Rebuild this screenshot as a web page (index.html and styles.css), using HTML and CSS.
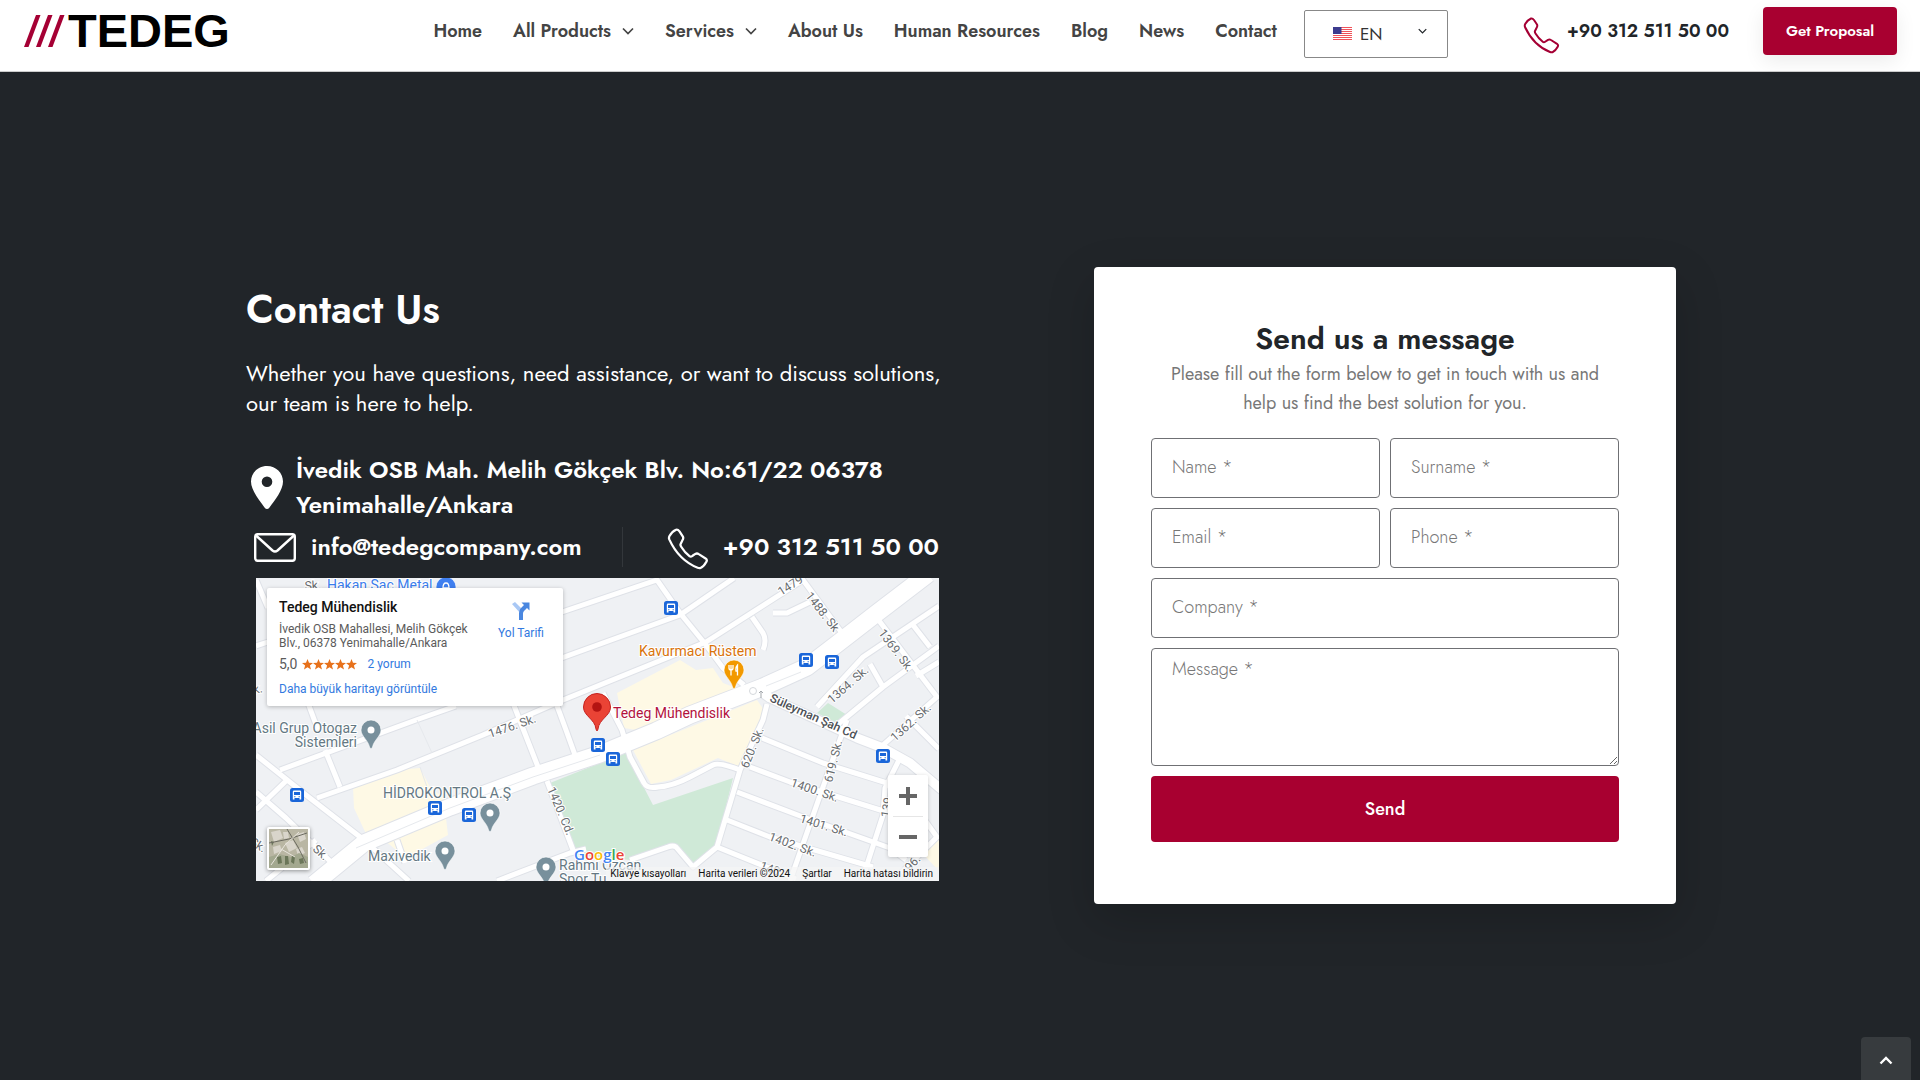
FILE: index.html
```html
<!DOCTYPE html>
<html lang="en">
<head>
<meta charset="utf-8">
<title>Contact Us - TEDEG</title>
<meta name="viewport" content="width=device-width, initial-scale=1">
<link rel="stylesheet" href="styles.css">
</head>
<body>
<svg class="defs" aria-hidden="true">
  <symbol id="handset" viewBox="0 0 37 37">
    <path d="M8 1.500Q9.500 1 11 3L14 7.500Q14.800 9 13.500 11L12 14Q11.500 15 12.500 16.500Q15.500 21.500 20 25Q21 25.600 22.500 24.500L25 22.800Q26.500 22 28 23L34 26.800Q35.700 28 34.700 29.800Q32.500 34 29.500 35.200Q28.500 35.600 27 35C17 31 7.500 22 2 10Q1.400 8.500 2.200 7Q4.500 3 8 1.500Z" fill="none" stroke="currentColor" stroke-width="2" stroke-linejoin="round"/>
  </symbol>
  <symbol id="chevron" viewBox="0 0 12 8"><path d="M1 1.500L6 6.500L11 1.500" fill="none" stroke="currentColor" stroke-width="1.700"/></symbol>
</svg>

<header class="header">
  <a class="logo" href="#" aria-label="TEDEG">
    <svg class="logo-mark" viewBox="0 0 41 33" aria-hidden="true"><path d="M0 32L12 0h4.500L4.500 32zM12 32L24 0h4.500L16.500 32zM24 32L36 0h4.500L28.500 32z" fill="#a50034"/></svg>
    <span>TEDEG</span>
  </a>
  <nav class="nav">
    <a href="#">Home</a>
    <a href="#">All Products <svg class="chev"><use href="#chevron"/></svg></a>
    <a href="#">Services <svg class="chev"><use href="#chevron"/></svg></a>
    <a href="#">About Us</a>
    <a href="#">Human Resources</a>
    <a href="#">Blog</a>
    <a href="#">News</a>
    <a href="#">Contact</a>
  </nav>
  <div class="lang">
    <svg class="flag" viewBox="0 0 19 13" aria-hidden="true"><path fill="#fff" d="M0 0h19v13H0z"/><path stroke="#f0525a" stroke-width="1" d="M0 .5h19M0 2.500h19M0 4.500h19M0 6.500h19M0 8.500h19M0 10.500h19M0 12.500h19"/><path fill="#3c3b8e" d="M0 0h8.500v7H0z"/></svg>
    <select aria-label="Language"><option>EN</option></select>
    <svg class="lang-chev"><use href="#chevron"/></svg>
  </div>
  <a class="header-phone" href="tel:+903125115000"><svg><use href="#handset"/></svg><span>+90 312 511 50 00</span></a>
  <button class="proposal" type="button">Get Proposal</button>
</header>

<main class="main">
  <div class="container">
    <section class="info">
      <h1>Contact Us</h1>
      <p class="lead">Whether you have questions, need assistance, or want to discuss solutions, our team is here to help.</p>
      <div class="address">
        <svg viewBox="0 0 32 43" aria-hidden="true"><path fill="#fff" fill-rule="evenodd" d="M16 0C7 0 0 7 0 15.500C0 24 8 34 13.500 41.500Q16 44.500 18.500 41.500C24 34 32 24 32 15.500C32 7 25 0 16 0ZM16 10.500a5.300 5.300 0 1 1 0 10.600a5.300 5.300 0 0 1 0-10.600Z"/></svg>
        <span>İvedik OSB Mah. Melih Gökçek Blv. No:61/22 06378 Yenimahalle/Ankara</span>
      </div>
      <div class="reach">
        <a class="mail" href="mailto:info@tedegcompany.com">
          <svg viewBox="0 0 42 29" aria-hidden="true"><g fill="none" stroke="#fff" stroke-width="2.400" stroke-linejoin="round"><rect x="1.200" y="1.200" width="39.600" height="26.600" rx="2.500"/><path d="M2 2.500L18.500 17.500Q21 19.500 23.500 17.500L40 2.500"/></g></svg>
          <span>info@tedegcompany.com</span>
        </a>
        <a class="tel" href="tel:+903125115000"><svg><use href="#handset"/></svg><span>+90 312 511 50 00</span></a>
      </div>

      <div class="map">
        <svg class="map-canvas" viewBox="0 0 683 303" preserveAspectRatio="xMidYMid slice">
          <defs>
            <g id="bus"><rect x="-7" y="-7" width="14" height="14" rx="2.500" fill="#1a66d9"/><path fill="#fff" fill-rule="evenodd" d="M-3-4.500h6q1.200 0 1.200 1.200V4.500h-1.700V3h-5v1.500h-1.700v-7.800q0-1.200 1.200-1.200zM-3-3v3h6v-3zM-2.800 1.200v1h1.200v-1zM1.600 1.200v1h1.200v-1z"/></g>
            <path id="pin" d="M0-10A10 10 0 0 0-10 0C-10 6-3 10-1.500 17Q0 20.500 1.500 17C3 10 10 6 10 0A10 10 0 0 0 0-10Z"/>
            <g id="roads">
              <path d="M300 36L401 2L424 35L450 67L467 90L488 107M300 82L424 37L478 0M61 220L141 192L227 157L307 122L450 64L547 2L586 55M621 40L681 119L627 167M683 28L607 79L561 129M683 68L627 109L581 147M657 47L674 69M660 98L683 84M614 86L627 109M650 138L683 171"/>
              <path d="M496 39L507 55Q511 62 507 72M517 35H531L554 24"/>
              <path d="M511 126L507 142L484 192L461 269L437 289L420 269Q417 267 412 269L374 282M591 142L567 209L534 303M506 160L567 185L631 205M494 189L534 204L634 235M481 214L547 239L634 270M471 242L514 259L617 289M461 269L540 301M643 182L629 210L627 237L608 296M668 241L681 259L645 295M634 270L650 282"/>
              <path d="M347 115L366 152L374 179L388 205Q391 211 402 209Q417 208 434 199L457 187Q463 184 484 192M291 203L317 272M241 303L314 275L330 271M257 125L284 194M300 125L310 152L319 177"/>
              <path d="M0 177L50 217L108 262L153 303M24 192L160 142L200 128M69 172L84 209M31 202L0 232M0 214L30 240L78 287M141 262L149 285M0 2L12 30M52 125L62 152M10 303L60 262M0 68L12 64"/>
            </g>
            <path id="main-road" d="M58 306L108 265L194 229L277 198L344 176L400 153L434 137L507 109L551 89L581 66L621 35L672-4"/>
            <path id="sah-road" d="M500 110L514 120L601 160L627 170L654 185L686 212"/>
          </defs>
          <path fill="#eff1f4" d="M0 0h683v303H0z"/>
          <path fill="#fef9e5" d="M361 115L424 82L440 92L457 90L467 105L485 112L380 152L368 150ZM377 172L501 122L508 132L484 189L462 180L415 202L395 206ZM97 209L141 192L164 190L174 209L190 222L111 258L98 230ZM128 262L190 240L192 257L150 280ZM666 275L683 260V293Z"/>
          <path fill="#cfe9d7" d="M294 205L344 185L370 175L397 227L477 200L461 265L437 289L417 269L374 282L321 277ZM572 125L591 137L581 145L561 135Z"/>
          <g fill="none" stroke-linejoin="round">
            <g stroke="#dfe2e8"><use href="#roads" stroke-width="7"/><use href="#main-road" stroke-width="19"/><use href="#sah-road" stroke-width="11"/></g>
            <g stroke="#fff"><use href="#roads" stroke-width="5"/><use href="#main-road" stroke-width="17"/><use href="#sah-road" stroke-width="9"/></g>
            <path stroke="#e6e9ed" d="M100 270L194 230L277 199L344 177M510 108L545 94M161 142L176 175M164 189L172 212"/>
            <circle cx="497" cy="113" r="3.500" stroke="#d5d8dc"/><path stroke="#a5a9ad" d="M505 120v-7M503 115l2-2l2 2"/>
          </g>
          <g class="street">
            <text transform="translate(234 160) rotate(-19)">1476. Sk.</text>
            <text transform="translate(525 18) rotate(-32)">1479</text>
            <text transform="translate(549 18) rotate(52)">1488. Sk</text>
            <text transform="translate(622 55) rotate(53)">1369. Sk.</text>
            <text transform="translate(576 126) rotate(-41)">1364. Sk.</text>
            <text transform="translate(639 164) rotate(-42)">1362. Sk.</text>
            <text class="avenue" transform="translate(513 123) rotate(24)">Süleyman Şah Cd</text>
            <text transform="translate(492 191) rotate(-68)">620. Sk.</text>
            <text transform="translate(576 205) rotate(-76)">619. Sk.</text>
            <text transform="translate(534 208) rotate(19)">1400. Sk.</text>
            <text transform="translate(543 244) rotate(17)">1401. Sk.</text>
            <text transform="translate(512 262) rotate(20)">1402. Sk.</text>
            <text transform="translate(503 291) rotate(20)">140</text>
            <text transform="translate(633 240) rotate(-80)">139</text>
            <text transform="translate(291 211) rotate(67)">1420. Cd.</text>
            <text transform="translate(56 272) rotate(42)">Sk.</text>
            <text transform="translate(654 294) rotate(-48)">96.</text>
            <text transform="translate(-7 266) rotate(32)">Sk.</text>
            <text transform="translate(49 12) rotate(-4)">Sk.</text>
            <text transform="translate(-2 116) rotate(-12)">k.</text>
          </g>
          <g fill="#78909c" stroke="#fff" stroke-width=".6">
            <use href="#pin" x="115" y="152"/><use href="#pin" x="234" y="235"/><use href="#pin" x="189" y="273"/><use href="#pin" x="290" y="289"/>
            <use href="#pin" x="478" y="92" fill="#f29900"/><use href="#pin" x="190" y="9" fill="#3f7ff0"/>
          </g>
          <g fill="#fff"><circle cx="115" cy="152" r="3.500"/><circle cx="234" cy="235" r="3.500"/><circle cx="189" cy="273" r="3.500"/><circle cx="290" cy="289" r="3.500"/></g>
          <path d="M475 87v4M473 87v3q0 2 2 2t2-2v-3M475 91v6.500M481.500 97.500V87Q479.500 89 480 93h1.500M187 10q0-5 3-5t3 5z" fill="none" stroke="#fff" stroke-width="1.300"/>
          <path d="M341 115.500A13.500 13.500 0 0 0 327.500 129C327.500 138 339 141 340 151Q341 155 342 151C343 141 354.500 138 354.500 129A13.500 13.500 0 0 0 341 115.500Z" fill="#ea4335" stroke="#c5221f"/><circle cx="341" cy="129" r="4.800" fill="#b31412"/>
          <use href="#bus" x="415" y="30"/><use href="#bus" x="550" y="82"/><use href="#bus" x="576" y="84"/><use href="#bus" x="342" y="167"/><use href="#bus" x="357" y="181"/><use href="#bus" x="627" y="178"/><use href="#bus" x="41" y="217"/><use href="#bus" x="179" y="230"/><use href="#bus" x="213" y="237"/>
          <g class="poi">
            <text x="71" y="12" fill="#3b7ded">Hakan Saç Metal</text>
            <text x="383" y="78" fill="#d9730b">Kavurmacı Rüstem</text>
            <text x="357" y="140" fill="#b3123c">Tedeg Mühendislik</text>
            <text x="101" y="155" text-anchor="end">Asil Grup Otogaz</text>
            <text x="101" y="169" text-anchor="end">Sistemleri</text>
            <text x="127" y="220">HİDROKONTROL A.Ş</text>
            <text x="112" y="283">Maxivedik</text>
            <text x="303" y="292">Rahmi Özcan</text>
            <text x="303" y="306">Spor Tu</text>
          </g>
          <text class="google" x="318" y="282"><tspan fill="#4285f4">G</tspan><tspan fill="#ea4335">o</tspan><tspan fill="#fbbc05">o</tspan><tspan fill="#4285f4">g</tspan><tspan fill="#34a853">l</tspan><tspan fill="#ea4335">e</tspan></text>
        </svg>
        <div class="place">
          <div class="place-text">
            <strong>Tedeg Mühendislik</strong>
            <p>İvedik OSB Mahallesi, Melih Gökçek Blv., 06378 Yenimahalle/Ankara</p>
            <div class="rating"><span>5,0</span>
              <svg viewBox="0 0 55 11" aria-label="5 stars"><defs><path id="star" d="M5.500 0L7 3.800L11 4L7.900 6.600L9 10.500L5.500 8.300L2 10.500L3.100 6.600L0 4L4 3.800Z"/></defs><g fill="#e7711b"><use href="#star"/><use href="#star" x="11"/><use href="#star" x="22"/><use href="#star" x="33"/><use href="#star" x="44"/></g></svg>
              <a href="#">2 yorum</a></div>
            <a class="larger" href="#">Daha büyük haritayı görüntüle</a>
          </div>
          <a class="directions" href="#"><svg viewBox="0 0 20 20" aria-hidden="true"><path fill="#a9c8f5" d="M1 3L4 1L12 9L10 13Z"/><path fill="#4a87e0" d="M8 19V12Q8 9 10 7L13 4L10.500 1.500H18.500V9.500L16 7L13 10Q12 11 12 12.500V19Z"/></svg>Yol Tarifi</a>
        </div>
        <button class="satellite" type="button" aria-label="Satellite view">
          <svg viewBox="0 0 39 39" aria-hidden="true"><path fill="#b9b6a3" d="M0 0h39v39H0z"/><path fill="#d9d5cb" d="M2 3l9-2l3 8l-9 4zM16 14l8-3l4 8l-8 4zM27 20l6-2l3 6l-7 3zM4 18l7-2l2 6l-8 3zM28 5l7-2l2 7l-6 3zM14 3l5 0l1 6l-5 1z"/><path fill="#a3a88f" d="M0 28l10-3l12 3l8-4l9 4v11H0z"/><path fill="#6b7659" d="M8 28l4-1l1 7l-4 1zM16 27l3 0l1 8l-4 1zM23 26l3 2l-1 7l-3-2zM2 12l3 1l-2 4zM30 30l4-1l1 5l-4 1z"/><path stroke="#6b6a60" stroke-width="1" fill="none" d="M18 0L29 18L37 34M0 14L20 10L38 4"/><path stroke="#e8e4dc" stroke-width="1" fill="none" d="M2 36L16 16L30 3M12 20l14 8"/></svg>
        </button>
        <div class="zoom">
          <button type="button" aria-label="Zoom in"><svg viewBox="0 0 20 20"><path d="M1 10h18M10 1v18" stroke="#666" stroke-width="4"/></svg></button>
          <button type="button" aria-label="Zoom out"><svg viewBox="0 0 20 20"><path d="M1 10h18" stroke="#666" stroke-width="4"/></svg></button>
        </div>
        <div class="credits"><a href="#">Klavye kısayolları</a><span>Harita verileri ©2024</span><a href="#">Şartlar</a><a href="#">Harita hatası bildirin</a></div>
      </div>
    </section>

    <form class="card">
      <h2>Send us a message</h2>
      <p>Please fill out the form below to get in touch with us and help us find the best solution for you.</p>
      <div class="fields">
        <label><span class="sr">Name</span><input type="text" placeholder="Name *"></label>
        <label><span class="sr">Surname</span><input type="text" placeholder="Surname *"></label>
        <label><span class="sr">Email</span><input type="email" placeholder="Email *"></label>
        <label><span class="sr">Phone</span><input type="tel" placeholder="Phone *"></label>
        <label class="wide"><span class="sr">Company</span><input type="text" placeholder="Company *"></label>
        <label class="wide"><span class="sr">Message</span><textarea placeholder="Message *"></textarea></label>
        <button class="send wide" type="submit">Send</button>
      </div>
    </form>
  </div>
</main>
<a class="to-top" href="#" aria-label="Back to top"><svg viewBox="0 0 14 9"><path d="M1.500 7.500L7 2L12.500 7.500" fill="none" stroke="#fff" stroke-width="2.400"/></svg></a>
</body>
</html>
```
FILE: styles.css
```css
*, *::before, *::after { box-sizing: border-box; }
body {
  margin: 0;
  min-height: 100vh;
  background: #212529;
  color: #212529;
  font-family: Jost, Lato, sans-serif;
  font-size: 18px;
}
a { color: inherit; text-decoration: none; }
button, input, textarea, select { font: inherit; }
h1, h2, p { margin: 0; }
.defs { position: absolute; width: 0; height: 0; }
.sr { position: absolute; width: 1px; height: 1px; overflow: hidden; clip-path: inset(50%); }

.header {
  display: flex;
  align-items: center;
  height: 72px;
  padding: 0 23px 9px 24px;
  background: #fff;
  border-bottom: 1px solid #ccc;
}
.logo {
  display: flex;
  align-items: center;
  gap: 3px;
  color: #000;
  font: bold 47px/48px "Liberation Sans", Arial, sans-serif;
}
.logo-mark { width: 41px; height: 33px; }
.nav {
  display: flex;
  gap: 31px;
  margin-left: auto;
  color: #444;
  font-size: 18px;
  font-weight: 600;
  white-space: nowrap;
}
.nav a { display: flex; align-items: center; }
.chev { width: 12px; height: 8px; margin-left: 11px; }
.lang {
  display: flex;
  align-items: center;
  gap: 8px;
  width: 144px;
  height: 48px;
  margin: 5px 0 0 27px;
  padding: 0 20px 0 28px;
  border: 1px solid #888;
  border-radius: 2px;
}
.flag { width: 19px; height: 13px; }
.lang select {
  flex: 1;
  min-width: 0;
  padding: 0;
  border: 0;
  appearance: none;
  background: none;
  color: #333;
  font-size: 17px;
}
.lang-chev { width: 9px; height: 6px; margin-bottom: 6px; }
.header-phone {
  display: flex;
  align-items: center;
  gap: 7px;
  margin-left: 75px;
  font-weight: 600;
  white-space: nowrap;
}
.header-phone svg { width: 37px; height: 37px; margin-top: 8px; color: #a50034; }
.proposal {
  width: 134px;
  height: 48px;
  margin-left: 34px;
  padding: 0;
  border: 0;
  border-radius: 4px;
  background: #a80030;
  color: #fff;
  font-size: 15px;
  font-weight: 600;
  box-shadow: 0 6px 20px rgba(0, 0, 0, .08);
}

.main { padding: 195px 24px 120px; }
.container {
  display: grid;
  grid-template-columns: minmax(0, 695px) minmax(0, 582px);
  justify-content: space-between;
  align-items: start;
  max-width: 1432px;
  margin: 0 auto;
}
.info { padding: 12px 0 0 2px; color: #fff; }
h1 { font-size: 40px; font-weight: 600; line-height: 60px; }
.lead { margin: 19px -8px 0 0; font-size: 22px; line-height: 30px; }
.address {
  display: flex;
  align-items: center;
  gap: 13px;
  margin: 34px 0 0 5px;
  font-size: 24px;
  font-weight: 600;
  line-height: 35px;
}
.address svg { flex: none; width: 32px; height: 43px; }
.reach {
  display: flex;
  align-items: center;
  justify-content: space-between;
  margin: 4px 0 10px 8px;
  font-size: 24px;
  font-weight: 600;
  line-height: 40px;
  white-space: nowrap;
}
.mail, .tel { display: flex; align-items: center; }
.mail { gap: 15px; padding-right: 40px; border-right: 1px solid #33373b; }
.mail svg { width: 42px; height: 29px; }
.tel { gap: 14px; }
.tel svg { width: 42px; height: 42px; margin: 2px 0 -2px; }

.map {
  position: relative;
  margin-left: 10px;
  aspect-ratio: 683 / 303;
  overflow: hidden;
  font-family: Roboto, sans-serif;
}
.map-canvas { display: block; width: 100%; height: 100%; }
.map text { paint-order: stroke; stroke: #fff; stroke-width: 2px; }
.street { fill: #686c70; font-size: 12px; }
.avenue { fill: #4c5055; font-weight: 500; }
.poi { fill: #647883; font-size: 14px; }
.google { font-family: "Open Sans", sans-serif; font-size: 15px; font-weight: 600; }
.place {
  position: absolute;
  top: 10px;
  left: 11px;
  display: flex;
  justify-content: space-between;
  width: 296px;
  height: 118px;
  padding: 10px 19px 0 12px;
  background: #fff;
  border-radius: 2px;
  box-shadow: 0 1px 4px rgba(0, 0, 0, .25);
  color: #5b5b5b;
  font-size: 12px;
  line-height: 14px;
}
.place a { color: #3279e0; }
.place-text { width: 196px; }
.place strong { display: block; color: #111; font-size: 14px; font-weight: 500; line-height: 18px; }
.place p { margin-top: 6px; }
.rating { display: flex; align-items: center; gap: 4px; margin-top: 7px; }
.rating span { font-size: 14px; }
.rating svg { width: 55px; height: 11px; margin-right: 7px; }
.larger { display: block; margin-top: 11px; }
.directions { display: flex; flex-direction: column; align-items: center; gap: 5px; padding-top: 3px; }
.directions svg { width: 20px; height: 20px; }
.satellite {
  position: absolute;
  bottom: 11px;
  left: 11px;
  width: 43px;
  height: 43px;
  padding: 0;
  border: 2px solid #fff;
  border-radius: 2px;
  box-shadow: 0 1px 4px rgba(0, 0, 0, .4);
}
.satellite svg { display: block; width: 100%; height: 100%; }
.zoom {
  position: absolute;
  right: 11px;
  bottom: 24px;
  width: 40px;
  padding: 0 5px;
  background: #fff;
  border-radius: 2px;
  box-shadow: 0 1px 4px rgba(0, 0, 0, .2);
}
.zoom button { display: block; width: 30px; height: 41px; padding: 0 5px; border: 0; background: none; }
.zoom button + button { border-top: 1px solid #e6e6e6; }
.zoom svg { display: block; width: 20px; height: 20px; }
.credits {
  position: absolute;
  right: 0;
  bottom: 0;
  display: flex;
  gap: 12px;
  padding: 0 6px 0 4px;
  background: rgba(245, 245, 245, .7);
  color: #111;
  font-size: 10px;
  line-height: 14px;
}

.card {
  padding: 51px 57px 62px;
  background: #fff;
  border-radius: 4px;
  box-shadow: 0 16px 48px rgba(0, 0, 0, .18);
  text-align: center;
}
h2 { font-size: 30px; font-weight: 600; line-height: 42px; }
.card p { padding: 0 16px; color: #777; font-size: 18px; line-height: 29px; }
.fields { display: grid; grid-template-columns: 1fr 1fr; gap: 10px; margin-top: 20px; }
.wide { grid-column: 1 / -1; }
.fields input, .fields textarea {
  display: block;
  width: 100%;
  height: 60px;
  padding: 0 20px 2px;
  border: 1px solid #6f7074;
  border-radius: 4px;
  background: #fff;
  color: #333;
  font-size: 18px;
}
.fields textarea { height: 118px; padding-top: 10px; line-height: 20px; }
.fields ::placeholder { color: #777; font-weight: 300; opacity: 1; }
.send { height: 66px; border: 0; border-radius: 4px; background: #a80030; color: #fff; font-weight: 500; }
.to-top {
  position: fixed;
  right: 9px;
  bottom: 0;
  display: grid;
  place-items: center;
  width: 50px;
  height: 43px;
  border-radius: 4px 4px 0 0;
  background: #373b3e;
}
.to-top svg { width: 14px; height: 9px; margin-top: 3px; }
```
